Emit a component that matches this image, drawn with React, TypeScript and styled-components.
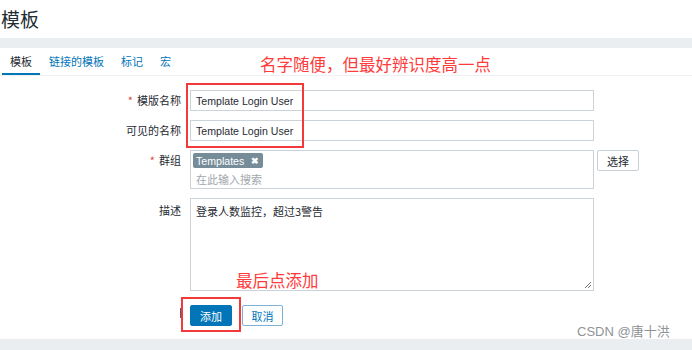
import React from "react";
import styled, { createGlobalStyle } from "styled-components";

const Global = createGlobalStyle`
  html, body { margin: 0; padding: 0; background: #ffffff; overflow: hidden; }
  * { box-sizing: border-box; }
  body { font-family: "Liberation Sans", "Noto Sans CJK SC", Arial, sans-serif; color: #1f2c33; }
`;

const Page = styled.div`
  position: relative;
  width: 692px;
  height: 350px;
  display: flex;
  flex-direction: column;
`;

const Header = styled.header`
  height: 38px;
  display: flex;
  align-items: center;
  padding: 0 0 2px 1px;
`;

const Title = styled.h1`
  margin: 0;
  font-family: "Noto Sans CJK SC", sans-serif;
  font-weight: 400;
  font-size: 19px;
  color: #1f2c33;
`;

const Band = styled.div<{ $h: number }>`
  height: ${(p) => p.$h}px;
  flex: none;
  background: #ebeef0;
`;

const Panel = styled.main`
  position: relative;
  height: 291px;
  background: #ffffff;
  display: flex;
  flex-direction: column;
`;

const TabBar = styled.nav`
  height: 28px;
  display: flex;
  padding-left: 2px;
  border-bottom: 1px solid #eef0f2;
`;

const Tab = styled.div<{ $active?: boolean }>`
  padding: 0 8px;
  display: flex;
  align-items: center;
  font-family: "Noto Sans CJK SC", sans-serif;
  font-size: 11px;
  color: ${(p) => (p.$active ? "#1f2c33" : "#0275b8")};
  border-bottom: 2px solid ${(p) => (p.$active ? "#0275b8" : "transparent")};
  margin-right: 1px;
  padding-top: 1px;
`;

const Form = styled.div`
  display: grid;
  grid-template-columns: 181px 404px auto;
  column-gap: 9px;
  row-gap: 9px;
  padding-top: 14px;
  align-items: start;
`;

const Label = styled.label<{ $pt?: number }>`
  text-align: right;
  font-family: "Noto Sans CJK SC", sans-serif;
  font-size: 11px;
  line-height: 21px;
  padding-top: ${(p) => p.$pt ?? 0}px;
  color: #1f2c33;
`;

const Req = styled.span`
  color: #e0454a;
  margin-right: 4px;
`;

const TextInput = styled.div`
  height: 21px;
  border: 1px solid #cbd3d8;
  padding: 0 5px;
  display: flex;
  align-items: center;
  font-family: "Liberation Sans", "Noto Sans CJK SC", sans-serif;
  font-size: 10.6px;
  color: #1f2c33;
  grid-column: 2;
`;

const MultiSelect = styled.div`
  height: 39px;
  border: 1px solid #cbd3d8;
  padding: 2px 2px 0 2px;
  display: flex;
  flex-direction: column;
  align-items: flex-start;
  gap: 3px;
`;

const Tag = styled.span`
  height: 15px;
  display: inline-flex;
  align-items: center;
  gap: 7px;
  padding: 0 4px 0 3px;
  border-radius: 2px;
  background: #768d99;
  color: #ffffff;
  font-family: "Liberation Sans", sans-serif;
  font-size: 10.6px;
`;

const TagX = styled.span`
  font-size: 9px;
  font-weight: bold;
`;

const Placeholder = styled.span`
  padding-left: 3px;
  font-family: "Noto Sans CJK SC", sans-serif;
  font-size: 11px;
  color: #a0a8ad;
`;

const SelectButton = styled.button`
  height: 21px;
  width: 42px;
  margin-left: -6px;
  background: #ffffff;
  border: 1px solid #c8d0d5;
  border-radius: 2px;
  font-family: "Noto Sans CJK SC", sans-serif;
  font-size: 11px;
  color: #1f2c33;
  padding: 0;
`;

const TextArea = styled.div`
  position: relative;
  height: 93px;
  border: 1px solid #cbd3d8;
  padding: 4px 5px;
  font-family: "Noto Sans CJK SC", sans-serif;
  font-size: 11px;
  line-height: 16px;
  color: #1f2c33;
  grid-column: 2;
`;

const Grip = styled.svg`
  position: absolute;
  right: 1px;
  bottom: 1px;
`;

const Buttons = styled.div`
  grid-column: 2;
  display: flex;
  gap: 10px;
  margin-top: 5px;
`;

const Btn = styled.button<{ $primary?: boolean }>`
  height: 21px;
  width: ${(p) => (p.$primary ? 42 : 41)}px;
  padding: 0;
  border-radius: 2px;
  border: 1px solid ${(p) => (p.$primary ? "#0275b8" : "#7fb0d6")};
  background: ${(p) => (p.$primary ? "#0275b8" : "#ffffff")};
  color: ${(p) => (p.$primary ? "#ffffff" : "#0275b8")};
  font-family: "Noto Sans CJK SC", sans-serif;
  font-size: 11px;
`;

const Note = styled.div<{ $x: number; $y: number }>`
  position: absolute;
  left: ${(p) => p.$x}px;
  top: ${(p) => p.$y}px;
  font-family: "Noto Sans CJK SC", sans-serif;
  font-size: 16.5px;
  line-height: 20px;
  color: #ff3b3b;
  white-space: nowrap;
`;

const Frame = styled.div<{ $x: number; $y: number; $w: number; $h: number }>`
  position: absolute;
  left: ${(p) => p.$x}px;
  top: ${(p) => p.$y}px;
  width: ${(p) => p.$w}px;
  height: ${(p) => p.$h}px;
  border: 2px solid #f23a3a;
`;

const Tick = styled.div`
  position: absolute;
  left: 180px;
  top: 260px;
  width: 1px;
  height: 10px;
  background: #555c60;
`;

const Watermark = styled.div`
  position: absolute;
  left: 577px;
  top: 323px;
  font-family: "Liberation Sans", "Noto Sans CJK SC", sans-serif;
  font-size: 13px;
  line-height: 18px;
  color: #8f9396;
  white-space: nowrap;
`;

export default function App() {
  return (
    <Page>
      <Global />
      <Header>
        <Title>模板</Title>
      </Header>
      <Band $h={10} />
      <Panel>
        <TabBar>
          <Tab $active>模板</Tab>
          <Tab>链接的模板</Tab>
          <Tab>标记</Tab>
          <Tab>宏</Tab>
        </TabBar>
        <Form>
          <Label>
            <Req>*</Req>模版名称
          </Label>
          <TextInput>Template Login User</TextInput>
          <span />
          <Label>可见的名称</Label>
          <TextInput>Template Login User</TextInput>
          <span />
          <Label>
            <Req>*</Req>群组
          </Label>
          <MultiSelect>
            <Tag>
              Templates<TagX>✖</TagX>
            </Tag>
            <Placeholder>在此输入搜索</Placeholder>
          </MultiSelect>
          <SelectButton>选择</SelectButton>
          <Label $pt={2}>描述</Label>
          <TextArea>
            登录人数监控，超过3警告
            <Grip width="8" height="8" viewBox="0 0 8 8">
              <path d="M7 1 L1 7 M7 4 L4 7" stroke="#6d767b" strokeWidth="1" />
            </Grip>
          </TextArea>
          <span />
          <Buttons>
            <Btn $primary>添加</Btn>
            <Btn>取消</Btn>
          </Buttons>
        </Form>
        <Note $x={260} $y={6}>名字随便，但最好辨识度高一点</Note>
        <Note $x={236} $y={222}>最后点添加</Note>
        <Frame $x={186} $y={35} $w={118} $h={65} />
        <Frame $x={181} $y={249} $w={60} $h={35} />
        <Tick />
      </Panel>
      <Band $h={11} />
      <Watermark>CSDN @唐十洪</Watermark>
    </Page>
  );
}
